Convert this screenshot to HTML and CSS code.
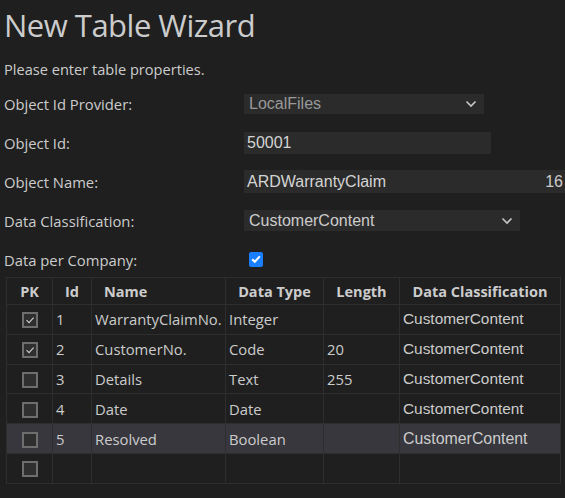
FILE: index.html
```html
<!DOCTYPE html>
<html>
<head>
<meta charset="utf-8">
<link rel="stylesheet" href="styles.css">
</head>
<body>
<h1 class="title">New Table Wizard</h1>
<p class="intro">Please enter table properties.</p>
<div class="form">
  <div class="row">
    <label class="label">Object Id Provider:</label>
    <div class="select select-provider disabled"><span>LocalFiles</span><svg class="chev" viewBox="0 0 12 8" width="12" height="8"><path d="M1.5 1.5 L6 6 L10.5 1.5" fill="none" stroke="currentColor" stroke-width="1.6"/></svg></div>
  </div>
  <div class="row">
    <label class="label">Object Id:</label>
    <div class="input input-id">50001</div>
  </div>
  <div class="row">
    <label class="label">Object Name:</label>
    <div class="input input-name"><span>ARDWarrantyClaim</span><span class="count">16</span></div>
  </div>
  <div class="row">
    <label class="label">Data Classification:</label>
    <div class="select select-class"><span>CustomerContent</span><svg class="chev" viewBox="0 0 12 8" width="12" height="8"><path d="M1.5 1.5 L6 6 L10.5 1.5" fill="none" stroke="currentColor" stroke-width="1.6"/></svg></div>
  </div>
  <div class="row">
    <label class="label">Data per Company:</label>
    <span class="check-blue"><svg viewBox="0 0 14 14" width="14" height="14"><path d="M3.2 7.2 L5.8 9.8 L10.8 4.4" fill="none" stroke="#fff" stroke-width="2"/></svg></span>
  </div>
</div>
<table class="grid">
  <colgroup>
    <col class="c-pk"><col class="c-id"><col class="c-name"><col class="c-type"><col class="c-len"><col class="c-class">
  </colgroup>
  <thead>
    <tr><th>PK</th><th>Id</th><th class="th-name">Name</th><th>Data Type</th><th>Length</th><th>Data Classification</th></tr>
  </thead>
  <tbody>
    <tr><td class="pk"><span class="cb checked"><svg viewBox="0 0 16 16" width="16" height="16"><path d="M4.5 8.2 L7 10.6 L11.6 5.6" fill="none" stroke="#d0d0d0" stroke-width="1.1"/></svg></span></td><td>1</td><td>WarrantyClaimNo.</td><td>Integer</td><td></td><td class="cls">CustomerContent</td></tr>
    <tr><td class="pk"><span class="cb checked"><svg viewBox="0 0 16 16" width="16" height="16"><path d="M4.5 8.2 L7 10.6 L11.6 5.6" fill="none" stroke="#d0d0d0" stroke-width="1.1"/></svg></span></td><td>2</td><td>CustomerNo.</td><td>Code</td><td>20</td><td class="cls">CustomerContent</td></tr>
    <tr><td class="pk"><span class="cb"></span></td><td>3</td><td>Details</td><td>Text</td><td>255</td><td class="cls">CustomerContent</td></tr>
    <tr><td class="pk"><span class="cb"></span></td><td>4</td><td>Date</td><td>Date</td><td></td><td class="cls">CustomerContent</td></tr>
    <tr class="hover"><td class="pk"><span class="cb"></span></td><td>5</td><td>Resolved</td><td>Boolean</td><td></td><td class="cls cls-focus">CustomerContent</td></tr>
    <tr><td class="pk"><span class="cb"></span></td><td></td><td></td><td></td><td></td><td></td></tr>
  </tbody>
</table>
</body>
</html>
```
FILE: styles.css
```css
html, body {
  margin: 0;
  padding: 0;
  background: #1f1f1f;
}
body {
  color: #cccccc;
  font-family: "Open Sans", "Noto Sans", sans-serif;
  font-size: 14px;
  padding: 0 0 0 4px;
  width: 561px;
  height: 498px;
  overflow: hidden;
}
.title {
  margin: 0;
  font-weight: 400;
  font-size: 31px;
  line-height: 40px;
  padding-top: 5px;
  letter-spacing: -0.5px;
}
.intro {
  margin: 0;
  height: 39px;
  line-height: 20px;
  padding-top: 14px;
  box-sizing: border-box;
  font-size: 14.6px;
}
.form {
  display: flex;
  flex-direction: column;
}
.row {
  display: grid;
  grid-template-columns: 240px 1fr;
  align-items: center;
  height: 39px;
}
.label {
  font-size: 14.8px;
}
.select, .input {
  box-sizing: border-box;
  background: #2b2b2b;
  font-family: "Liberation Sans", Arial, sans-serif;
  font-size: 16px;
  display: flex;
  align-items: center;
  justify-content: space-between;
  padding: 0 4px 0 3px;
}
.select-provider {
  width: 240px;
  height: 20px;
  color: #999999;
  padding-left: 5px;
  padding-right: 7px;
}
.select-class {
  width: 276px;
  height: 21px;
  color: #cccccc;
  padding-left: 5px;
  padding-right: 7px;
}
.chev { color: #c8c8c8; }
.input-id {
  width: 247px;
  height: 22px;
  color: #d4d4d4;
}
.input-name {
  width: 321px;
  height: 23px;
  color: #d4d4d4;
  padding-right: 2px;
}
.count { color: #cccccc; }
.check-blue {
  display: inline-block;
  width: 14px;
  height: 15px;
  margin-left: 5px;
  background: #1a7fff;
  border-radius: 2px;
}
.check-blue svg { display: block; }

.grid {
  border-collapse: collapse;
  margin-left: 2px;
  margin-top: -2px;
  table-layout: fixed;
  width: 554px;
}
.c-pk { width: 46px; }
.c-id { width: 39px; }
.c-name { width: 134px; }
.c-type { width: 98px; }
.c-len { width: 76px; }
.c-class { width: 161px; }
.grid th, .grid td {
  border: 1px solid #2e2e2e;
  padding: 0 0 0 3px;
  white-space: nowrap;
  overflow: hidden;
}
.grid th {
  height: 26px;
  font-weight: 700;
  text-align: center;
  padding: 0;
  font-size: 14.5px;
}
.grid th.th-name {
  text-align: left;
  padding-left: 12px;
}
.grid td {
  height: 28.8px;
  font-size: 14.8px;
}
.grid td.pk {
  text-align: center;
  padding: 0;
}
.grid td.cls {
  font-family: "Liberation Sans", Arial, sans-serif;
  font-size: 15.4px;
}
.grid td.cls-focus {
  font-size: 15.9px;
}
.grid tr.hover td {
  background: #37373d;
}
.cb {
  display: inline-block;
  box-sizing: border-box;
  width: 16px;
  height: 16px;
  border: 2px solid #6e6e6e;
  background: #2f2f2f;
  vertical-align: middle;
  position: relative;
  top: -1px;
}
.cb svg {
  display: block;
  margin: -2px 0 0 -2px;
}
```
